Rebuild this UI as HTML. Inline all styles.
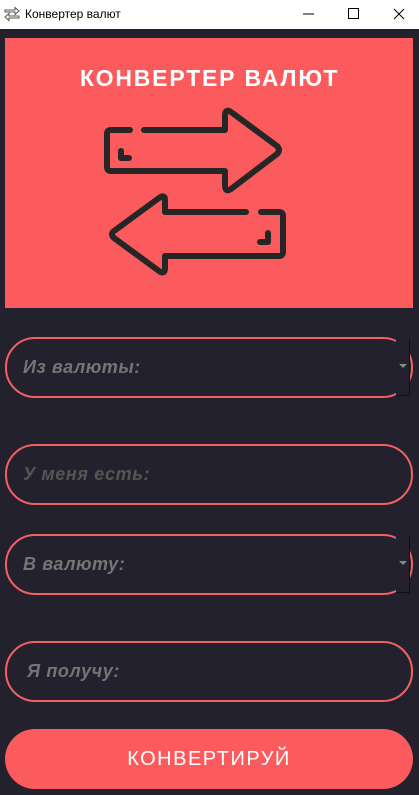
<!DOCTYPE html>
<html><head><meta charset="utf-8"><style>
*{margin:0;padding:0;box-sizing:border-box}
body{width:419px;height:795px;background:#22212d;position:relative;overflow:hidden;font-family:"Liberation Sans",sans-serif}
.tb{position:absolute;left:0;top:0;width:419px;height:29px;background:#fff;font-size:12px;color:#000}
.tb .t{position:absolute;left:25px;top:7px}
.panel{position:absolute;left:5px;top:38px;width:408px;height:270px;background:#fb5b5c}
.title{position:absolute;left:0;width:100%;top:65px;text-align:center;color:#fff;font-weight:bold;font-size:23px;letter-spacing:1.8px}
.box{position:absolute;left:5px;width:408px;height:61px;border:2px solid #f36062;border-radius:30px}
.ph{position:absolute;left:16px;top:18px;font-style:italic;font-weight:600;font-size:18px;color:#757575;letter-spacing:0.6px}
.dd{position:absolute;left:396px;width:14px;height:58px;background:#22212d;border-right:1px solid #111;border-bottom:1px solid #111}
.dd:after{content:"";position:absolute;left:3px;top:26px;border-left:4px solid transparent;border-right:4px solid transparent;border-top:4px solid #888}
.btn{position:absolute;left:5px;top:729px;width:408px;height:60px;background:#fb5b5c;border-radius:30px;color:#fff;text-align:center;line-height:60px;font-size:20px;letter-spacing:1.5px;font-weight:normal}
</style></head><body>
<div class="tb">
<svg style="position:absolute;left:4px;top:6px" width="16" height="16" viewBox="0 0 16 16" fill="none" stroke="#555" stroke-width="1"><path d="M1 4h10V1.5l4 3.5-4 3.5V6H1zM15 10H5V7.5L1 11l4 3.5V12h10z"/></svg>
<span class="t">Конвертер валют</span>
<svg style="position:absolute;left:300px;top:6px" width="110" height="16" viewBox="0 0 110 16" fill="none" stroke="#000" stroke-width="1"><path d="M3 8h11"/><path d="M48.5 2.5h10v10h-10z"/><path d="M94 3l10 10M104 3l-10 10"/></svg>
</div>
<div class="panel"></div>
<div class="title">КОНВЕРТЕР ВАЛЮТ</div>
<svg style="position:absolute;left:0;top:0" width="419" height="310" fill="none" stroke="#262626" stroke-width="6" stroke-linecap="round" stroke-linejoin="round">
<path d="M130 130H111Q107 130 107 134V167Q107 171 111 171H225V185Q225 193 231 189L277 154Q281 150 277 146L231 112Q225 108 225 116V130H144"/>
<path d="M121 151V158H129"/>
<path d="M246 212H165V200Q165 194 159 198L114 231Q110 234 114 238L159 271Q165 275 165 268V256H279Q283 256 283 252V216Q283 212 279 212H261"/>
<path d="M268 233V242H260"/>
</svg>
<div class="box" style="top:337px"><span class="ph">Из валюты:</span></div>
<div class="dd" style="top:338px"></div>
<div class="box" style="top:444px"><span class="ph" style="color:#555">У меня есть:</span></div>
<div class="box" style="top:534px"><span class="ph">В валюту:</span></div>
<div class="dd" style="top:535px"></div>
<div class="box" style="top:641px"><span class="ph" style="left:20px">Я получу:</span></div>
<div class="btn">КОНВЕРТИРУЙ</div>
</body></html>
